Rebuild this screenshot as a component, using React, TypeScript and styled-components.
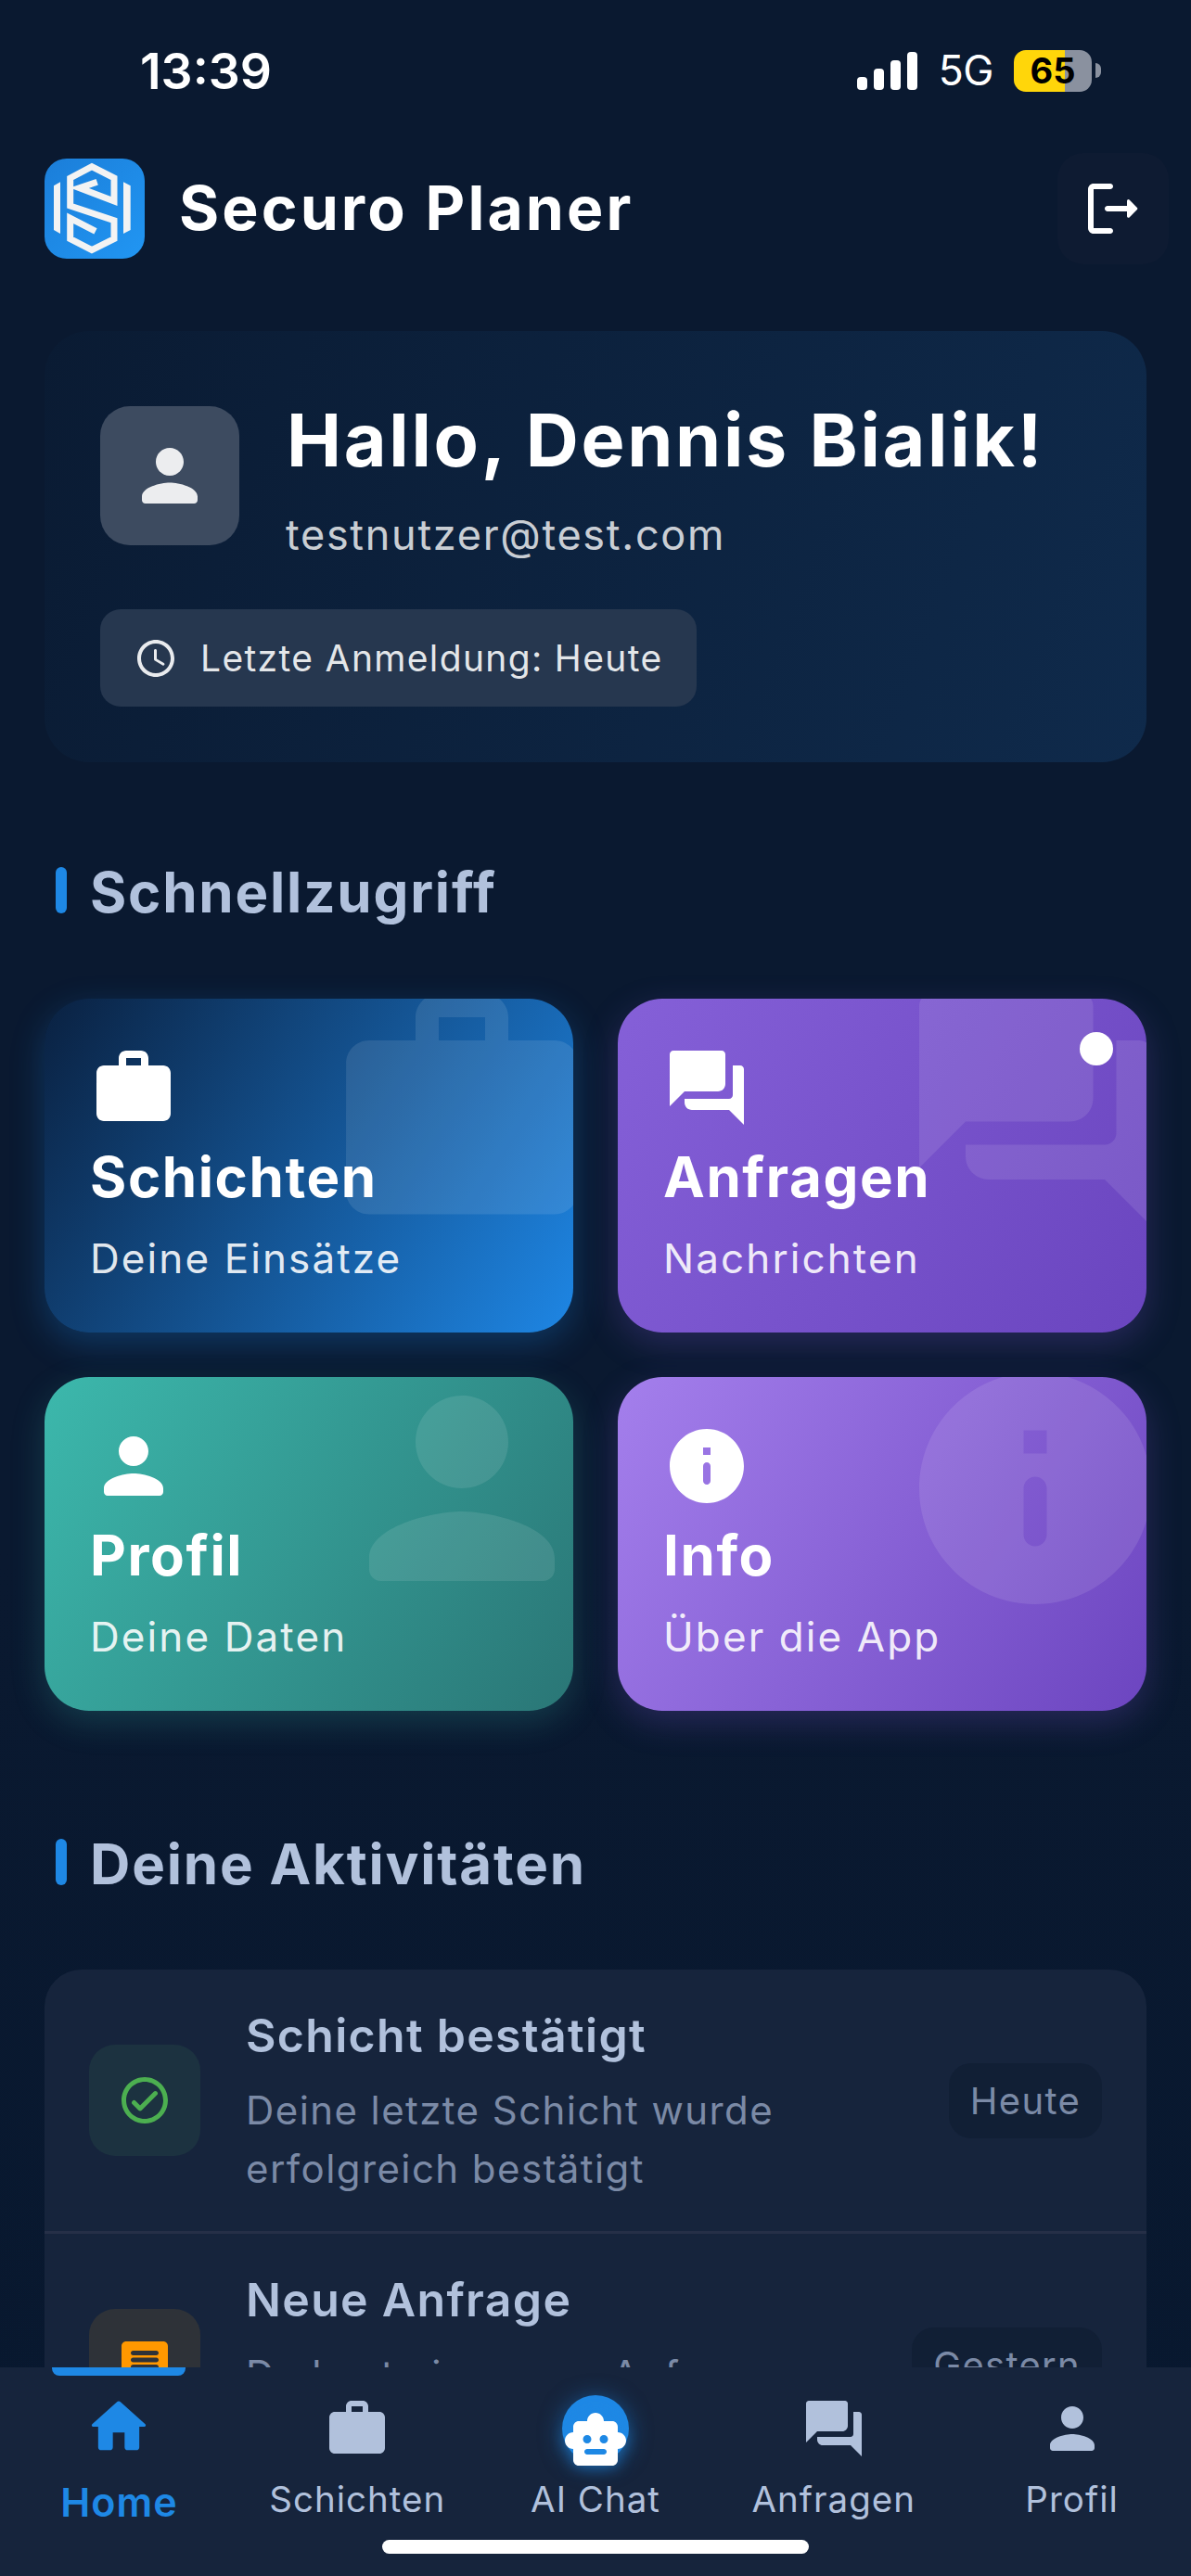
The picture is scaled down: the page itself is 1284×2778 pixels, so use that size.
import React from "react";
import styled, { createGlobalStyle } from "styled-components";

const Global = createGlobalStyle`
  html, body { margin: 0; padding: 0; background: #0a1930; }
  * { box-sizing: border-box; }
  body { font-family: Inter, "Noto Sans", "Liberation Sans", sans-serif; }
`;

const paths = {
  work: "M20 6h-4V4c0-1.11-.89-2-2-2h-4c-1.11 0-2 .89-2 2v2H4c-1.11 0-1.99.89-1.99 2L2 19c0 1.11.89 2 2 2h16c1.11 0 2-.89 2-2V8c0-1.11-.89-2-2-2zm-6 0h-4V4h4v2z",
  forum: "M21 6h-2v8c0 .55-.45 1-1 1H6v1c0 1.1.9 2 2 2h10l4 4V7c0-.55-.45-1-1-1z M17 11V3c0-.55-.45-1-1-1H3c-.55 0-1 .45-1 1v14l4-4h9c1.1 0 2-.9 2-2z",
  person: "M12 12c2.21 0 4-1.79 4-4s-1.79-4-4-4-4 1.79-4 4 1.79 4 4 4zm0 2c-2.67 0-8 1.34-8 4v1c0 .55.45 1 1 1h14c.55 0 1-.45 1-1v-1c0-2.66-5.33-4-8-4z",
  info: "M12 2C6.48 2 2 6.48 2 12s4.48 10 10 10 10-4.48 10-10S17.52 2 12 2zm0 15c-.55 0-1-.45-1-1v-4c0-.55.45-1 1-1s1 .45 1 1v4c0 .55-.45 1-1 1zm1-8h-2V7h2v2z",
  home: "M10 19v-5h4v5c0 .55.45 1 1 1h3c.55 0 1-.45 1-1v-7h1.7c.46 0 .68-.57.33-.87L12.67 3.6c-.38-.34-.96-.34-1.34 0l-8.36 7.53c-.34.3-.13.87.33.87H5v7c0 .55.45 1 1 1h3c.55 0 1-.45 1-1z",
  check: "M12 2C6.48 2 2 6.48 2 12s4.48 10 10 10 10-4.48 10-10S17.52 2 12 2zm0 18c-4.41 0-8-3.59-8-8s3.59-8 8-8 8 3.59 8 8-3.59 8-8 8zm3.88-11.71L10 14.17l-1.88-1.88a.996.996 0 1 0-1.41 1.41l2.59 2.59c.39.39 1.02.39 1.41 0L17.3 9.7a.996.996 0 0 0 0-1.41c-.39-.39-1.03-.39-1.42 0z",
  clock: "M11.99 2C6.47 2 2 6.48 2 12s4.47 10 9.99 10C17.52 22 22 17.52 22 12S17.52 2 11.99 2zM12 20c-4.42 0-8-3.58-8-8s3.58-8 8-8 8 3.58 8 8-3.58 8-8 8zm-.22-13h-.06c-.4 0-.72.32-.72.72v4.72c0 .35.18.68.49.86l4.15 2.49c.34.2.78.1.98-.24.21-.34.1-.79-.25-.99l-3.87-2.3V7.72c0-.4-.32-.72-.72-.72z",
  logout: "M5 5h6c.55 0 1-.45 1-1s-.45-1-1-1H5c-1.1 0-2 .9-2 2v14c0 1.1.9 2 2 2h6c.55 0 1-.45 1-1s-.45-1-1-1H5V5z M20.65 11.65l-2.79-2.79A.501.501 0 0 0 17 9.21V11h-7c-.55 0-1 .45-1 1s.45 1 1 1h7v1.79c0 .45.54.67.85.35l2.79-2.79c.2-.19.2-.51.01-.7z",
  message: "M20 2H4c-1.1 0-1.99.9-1.99 2L2 22l4-4h14c1.1 0 2-.9 2-2V4c0-1.1-.9-2-2-2zm-3 12H7c-.55 0-1-.45-1-1s.45-1 1-1h10c.55 0 1 .45 1 1s-.45 1-1 1zm0-3H7c-.55 0-1-.45-1-1s.45-1 1-1h10c.55 0 1 .45 1 1s-.45 1-1 1zm0-3H7c-.55 0-1-.45-1-1S6.45 6 7 6h10c.55 0 1 .45 1 1s-.45 1-1 1z",
  robot: "M20 9V7c0-1.1-.9-2-2-2h-3c0-1.66-1.34-3-3-3S9 3.34 9 5H6c-1.1 0-2 .9-2 2v2c-1.66 0-3 1.34-3 3s1.34 3 3 3v4c0 1.1.9 2 2 2h12c1.1 0 2-.9 2-2v-4c1.66 0 3-1.34 3-3s-1.34-3-3-3zM7.5 11.5C7.5 10.67 8.17 10 9 10s1.5.67 1.5 1.5S9.83 13 9 13s-1.5-.67-1.5-1.5zM15 17H9c-.55 0-1-.45-1-1s.45-1 1-1h6c.55 0 1 .45 1 1s-.45 1-1 1zm0-4c-.83 0-1.5-.67-1.5-1.5S14.17 10 15 10s1.5.67 1.5 1.5S15.83 13 15 13z",
};

type IconName = keyof typeof paths;

const GlyphSvg = styled.svg<{ $size: number; $color: string }>`
  display: block;
  flex: none;
  width: ${(p) => p.$size}px;
  height: ${(p) => p.$size}px;
  fill: ${(p) => p.$color};
`;

const Glyph = ({ name, size, color }: { name: IconName; size: number; color: string }) => (
  <GlyphSvg viewBox="0 0 24 24" $size={size} $color={color}>
    <path d={paths[name]} fillRule="evenodd" />
  </GlyphSvg>
);

const Page = styled.div`
  width: 1284px;
  height: 2778px;
  display: flex;
  flex-direction: column;
  overflow: hidden;
  background: linear-gradient(180deg, #0a1930 0%, #0a1930 60%, #08182f 100%);
  color: #fff;
`;

const Scroll = styled.main`
  flex: 1;
  min-height: 0;
  overflow: hidden;
`;

/* Status bar */
const StatusBar = styled.div`
  height: 152px;
  padding: 0 97px 0 151px;
  display: flex;
  align-items: center;
  justify-content: space-between;
`;

const Clock = styled.span`
  font-size: 53.5px;
  font-weight: 600;
`;

const StatusRight = styled.div`
  display: flex;
  align-items: center;
`;

const Signal = styled.div`
  display: flex;
  align-items: flex-end;
  gap: 7px;
  height: 41px;
  margin-right: 23px;
`;

const SignalBar = styled.i<{ $h: number }>`
  display: block;
  width: 11px;
  height: ${(p) => p.$h}px;
  border-radius: 4px;
  background: #fff;
`;

const Network = styled.span`
  font-size: 44.5px;
  font-weight: 400;
  margin-right: 22px;
  letter-spacing: -0.5px;
`;

const Battery = styled.div`
  width: 84px;
  height: 45px;
  border-radius: 13px;
  overflow: hidden;
  background: linear-gradient(90deg, #ffd60a 0 65%, #8a919f 65% 100%);
  color: #000;
  font-size: 38px;
  font-weight: 700;
  line-height: 45px;
  text-align: center;
`;

const BatteryTip = styled.i`
  display: block;
  width: 6px;
  height: 16px;
  margin-left: 4px;
  border-radius: 0 8px 8px 0;
  background: #8a919f;
`;

/* App header */
const Header = styled.header`
  height: 120px;
  margin-top: 13px;
  padding: 0 24px 0 48px;
  display: flex;
  align-items: center;
`;

const LogoSvg = styled.svg`
  display: block;
  flex: none;
  width: 108px;
  height: 108px;
`;

const AppTitle = styled.h1`
  flex: 1;
  margin: -2px 0 0 37px;
  font-size: 66px;
  font-weight: 700;
  letter-spacing: 3.1px;
  line-height: 80px;
`;

const LogoutButton = styled.div`
  width: 120px;
  height: 120px;
  border-radius: 28px;
  background: #0e1b32;
  display: flex;
  align-items: center;
  justify-content: center;
`;

/* Greeting card */
const Welcome = styled.section`
  margin: 72px 48px 0;
  height: 465px;
  padding: 81px 60px 0;
  border-radius: 48px;
  background: linear-gradient(111deg, #0a1b33 0%, #0f2a4b 100%);
`;

const WelcomeRow = styled.div`
  display: flex;
  gap: 51px;
  height: 150px;
`;

const Avatar = styled.div`
  width: 150px;
  height: 150px;
  flex: none;
  border-radius: 32px;
  background: #3d4b60;
  display: flex;
  align-items: center;
  justify-content: center;
`;

const Greeting = styled.div`
  font-size: 79px;
  font-weight: 700;
  letter-spacing: 2.7px;
  line-height: 90px;
  margin-top: -9px;
`;

const Email = styled.div`
  margin-top: 30px;
  margin-left: -1px;
  font-size: 45px;
  letter-spacing: 1.7px;
  line-height: 56px;
  color: rgba(255, 255, 255, 0.8);
`;

const LastLogin = styled.div`
  margin-top: 69px;
  width: fit-content;
  height: 105px;
  padding: 0 36px;
  display: flex;
  align-items: center;
  gap: 24px;
  border-radius: 22px;
  background: #26374f;
  font-size: 39px;
  letter-spacing: 1.35px;
  color: rgba(255, 255, 255, 0.9);
`;

/* Section heading */
const SectionHead = styled.div<{ $top: number }>`
  margin-top: ${(p) => p.$top}px;
  padding-left: 60px;
  display: flex;
  align-items: center;
  gap: 25px;
  height: 50px;
`;

const SectionBar = styled.i`
  width: 12px;
  height: 50px;
  border-radius: 6px;
  background: #1e88e5;
`;

const SectionTitle = styled.h2`
  margin: 3px 0 0;
  font-size: 60px;
  font-weight: 700;
  letter-spacing: 1.8px;
  color: #b1c1dc;
`;

/* Quick access grid */
const QuickGrid = styled.div`
  margin: 92px 48px 0;
  display: grid;
  grid-template-columns: 1fr 1fr;
  gap: 48px;
`;

const QuickCard = styled.div<{ $bg: string }>`
  position: relative;
  height: 360px;
  padding: 48px;
  border-radius: 48px;
  overflow: hidden;
  background: ${(p) => p.$bg};
`;

const QuickShadow = styled.div<{ $glow: string }>`
  border-radius: 48px;
  box-shadow: 0 12px 36px ${(p) => p.$glow};
`;

const Watermark = styled.div`
  position: absolute;
  top: -30px;
  right: -30px;
`;

const Dot = styled.i`
  position: absolute;
  top: 36px;
  right: 36px;
  width: 36px;
  height: 36px;
  border-radius: 50%;
  background: #fff;
`;

const QuickTitle = styled.div`
  position: relative;
  margin: 10px 0 0 1px;
  font-size: 60px;
  font-weight: 700;
  letter-spacing: 1.6px;
  line-height: 76px;
`;

const QuickSub = styled.div`
  position: relative;
  margin: 22px 0 0 1px;
  font-size: 44px;
  letter-spacing: 2.1px;
  line-height: 56px;
  color: rgba(255, 255, 255, 0.9);
`;

/* Activity list */
const Activities = styled.section`
  margin: 91px 48px 0;
  border-radius: 40px 40px 0 0;
  background: #16243c;
`;

const ActivityRow = styled.div<{ $divider?: boolean }>`
  height: ${(p) => (p.$divider ? 285 : 282)}px;
  padding: 0 48px;
  display: flex;
  align-items: center;
  gap: 49px;
  border-top: ${(p) => (p.$divider ? "3px solid #252f47" : "none")};
`;

const ActivityIcon = styled.div<{ $bg: string }>`
  width: 120px;
  height: 120px;
  flex: none;
  border-radius: 28px;
  background: ${(p) => p.$bg};
  display: flex;
  align-items: center;
  justify-content: center;
`;

const ActivityText = styled.div`
  flex: 1;
  min-width: 0;
  margin-top: 3px;
`;

const ActivityTitle = styled.div`
  font-size: 50px;
  font-weight: 600;
  letter-spacing: 1.3px;
  line-height: 64px;
  color: #b1c1dc;
`;

const ActivityDesc = styled.div`
  margin-top: 17px;
  font-size: 42px;
  letter-spacing: 1.42px;
  line-height: 63px;
  color: #7b8aa6;
`;

const Stamp = styled.div`
  flex: none;
  height: 81px;
  padding: 0 23px;
  display: flex;
  align-items: center;
  border-radius: 24px;
  background: #111f35;
  font-size: 40px;
  letter-spacing: 1.3px;
  color: #7b8aa6;
`;

/* Bottom navigation */
const BottomNav = styled.nav`
  position: relative;
  flex: none;
  height: 225px;
  display: grid;
  grid-template-columns: repeat(5, 1fr);
  background: #16243c;
`;

const ActiveMark = styled.i`
  position: absolute;
  top: 0;
  left: 56px;
  width: 144px;
  height: 9px;
  border-radius: 0 0 8px 8px;
  background: #1e88e5;
`;

const Tab = styled.div<{ $active?: boolean }>`
  display: flex;
  flex-direction: column;
  align-items: center;
  padding-top: ${(p) => (p.$active ? 26 : 30)}px;
  color: ${(p) => (p.$active ? "#1e88e5" : "#b1c1dc")};
`;

const TabIconSlot = styled.div`
  position: relative;
  height: 72px;
  display: flex;
  justify-content: center;
`;

const AiHalo = styled.i`
  position: absolute;
  top: 0;
  left: 50%;
  width: 72px;
  height: 72px;
  margin-left: -36px;
  border-radius: 50%;
  background: #1e88e5;
  box-shadow: 0 4px 24px rgba(30, 136, 229, 0.55);
`;

const AiRobot = styled.div`
  position: relative;
  margin-top: 13px;
  filter: drop-shadow(0 0 8px rgba(30, 136, 229, 0.6));
`;

const TabLabel = styled.span<{ $active?: boolean }>`
  margin-top: ${(p) => (p.$active ? 22 : 15)}px;
  font-size: ${(p) => (p.$active ? 43 : 38.5)}px;
  font-weight: ${(p) => (p.$active ? 600 : 400)};
  letter-spacing: 1px;
  line-height: 50px;
`;

const HomeBar = styled.i`
  position: absolute;
  left: 412px;
  bottom: 24px;
  width: 460px;
  height: 15px;
  border-radius: 8px;
  background: #fff;
`;

const Logo = () => (
  <LogoSvg viewBox="0 0 108 108">
    <defs>
      <linearGradient id="logoFill" x1="0" y1="0" x2="1" y2="1">
        <stop offset="0" stopColor="#1b7ed9" />
        <stop offset="1" stopColor="#2196f3" />
      </linearGradient>
    </defs>
    <rect width="108" height="108" rx="24" fill="url(#logoFill)" />
    <g fill="none" stroke="#f3f3f3" strokeWidth="7" strokeLinejoin="miter">
      <path d="M56.7 25.3 37.7 31.7 75 46V21L51 8.7 27.7 21V51L75 66.7V86.7L51 98.7 27.7 86.7V64.3L55 78.3" />
    </g>
    <path d="M17 25.3 10 29.3V77L17 81ZM85 25.3 92.7 29.3V77L85 81Z" fill="#f3f3f3" />
  </LogoSvg>
);

const quick: {
  title: string;
  sub: string;
  icon: IconName;
  bg: string;
  glow: string;
  dot?: boolean;
}[] = [
  { title: "Schichten", sub: "Deine Einsätze", icon: "work", bg: "linear-gradient(122deg, #0a2141 0%, #1e86e4 100%)", glow: "rgba(30, 136, 229, 0.28)" },
  { title: "Anfragen", sub: "Nachrichten", icon: "forum", bg: "linear-gradient(122deg, #8560d8 0%, #6a45bf 100%)", glow: "rgba(126, 87, 214, 0.25)", dot: true },
  { title: "Profil", sub: "Deine Daten", icon: "person", bg: "linear-gradient(122deg, #3cb8ac 0%, #2a7676 100%)", glow: "rgba(60, 184, 172, 0.22)" },
  { title: "Info", sub: "Über die App", icon: "info", bg: "linear-gradient(122deg, #a47fec 0%, #6c45c0 100%)", glow: "rgba(126, 87, 214, 0.25)" },
];

const tabs: { label: string; icon: IconName }[] = [
  { label: "Home", icon: "home" },
  { label: "Schichten", icon: "work" },
  { label: "AI Chat", icon: "robot" },
  { label: "Anfragen", icon: "forum" },
  { label: "Profil", icon: "person" },
];

export default function App() {
  return (
    <Page>
      <Global />
      <Scroll>
        <StatusBar>
          <Clock>13:39</Clock>
          <StatusRight>
            <Signal>
              {[14, 23, 32, 41].map((h) => (
                <SignalBar key={h} $h={h} />
              ))}
            </Signal>
            <Network>5G</Network>
            <Battery>65</Battery>
            <BatteryTip />
          </StatusRight>
        </StatusBar>

        <Header>
          <Logo />
          <AppTitle>Securo Planer</AppTitle>
          <LogoutButton>
            <Glyph name="logout" size={72} color="#fff" />
          </LogoutButton>
        </Header>

        <Welcome>
          <WelcomeRow>
            <Avatar>
              <Glyph name="person" size={90} color="rgba(255,255,255,0.9)" />
            </Avatar>
            <div>
              <Greeting>Hallo, Dennis Bialik!</Greeting>
              <Email>testnutzer@test.com</Email>
            </div>
          </WelcomeRow>
          <LastLogin>
            <Glyph name="clock" size={48} color="rgba(255,255,255,0.9)" />
            Letzte Anmeldung: Heute
          </LastLogin>
        </Welcome>

        <SectionHead $top={113}>
          <SectionBar />
          <SectionTitle>Schnellzugriff</SectionTitle>
        </SectionHead>

        <QuickGrid>
          {quick.map((q) => (
            <QuickShadow key={q.title} $glow={q.glow}>
              <QuickCard $bg={q.bg}>
                <Watermark>
                  <Glyph name={q.icon} size={300} color="rgba(255,255,255,0.1)" />
                </Watermark>
                {q.dot && <Dot />}
                <Glyph name={q.icon} size={96} color="#fff" />
                <QuickTitle>{q.title}</QuickTitle>
                <QuickSub>{q.sub}</QuickSub>
              </QuickCard>
            </QuickShadow>
          ))}
        </QuickGrid>

        <SectionHead $top={138}>
          <SectionBar />
          <SectionTitle>Deine Aktivitäten</SectionTitle>
        </SectionHead>

        <Activities>
          <ActivityRow>
            <ActivityIcon $bg="#1c3240">
              <Glyph name="check" size={60} color="#4caf50" />
            </ActivityIcon>
            <ActivityText>
              <ActivityTitle>Schicht bestätigt</ActivityTitle>
              <ActivityDesc>Deine letzte Schicht wurde erfolgreich bestätigt</ActivityDesc>
            </ActivityText>
            <Stamp>Heute</Stamp>
          </ActivityRow>
          <ActivityRow $divider>
            <ActivityIcon $bg="#2e3238">
              <Glyph name="message" size={60} color="#ff9800" />
            </ActivityIcon>
            <ActivityText>
              <ActivityTitle>Neue Anfrage</ActivityTitle>
              <ActivityDesc>Du hast eine neue Anfrage erhalten</ActivityDesc>
            </ActivityText>
            <Stamp>Gestern</Stamp>
          </ActivityRow>
        </Activities>
      </Scroll>

      <BottomNav>
        <ActiveMark />
        {tabs.map((t, i) => (
          <Tab key={t.label} $active={i === 0}>
            <TabIconSlot>
              {t.icon === "robot" ? (
                <>
                  <AiHalo />
                  <AiRobot>
                    <Glyph name="robot" size={72} color="#fff" />
                  </AiRobot>
                </>
              ) : (
                <Glyph name={t.icon} size={i === 0 ? 76 : 72} color={i === 0 ? "#1e88e5" : "#b1c1dc"} />
              )}
            </TabIconSlot>
            <TabLabel $active={i === 0}>{t.label}</TabLabel>
          </Tab>
        ))}
        <HomeBar />
      </BottomNav>
    </Page>
  );
}
